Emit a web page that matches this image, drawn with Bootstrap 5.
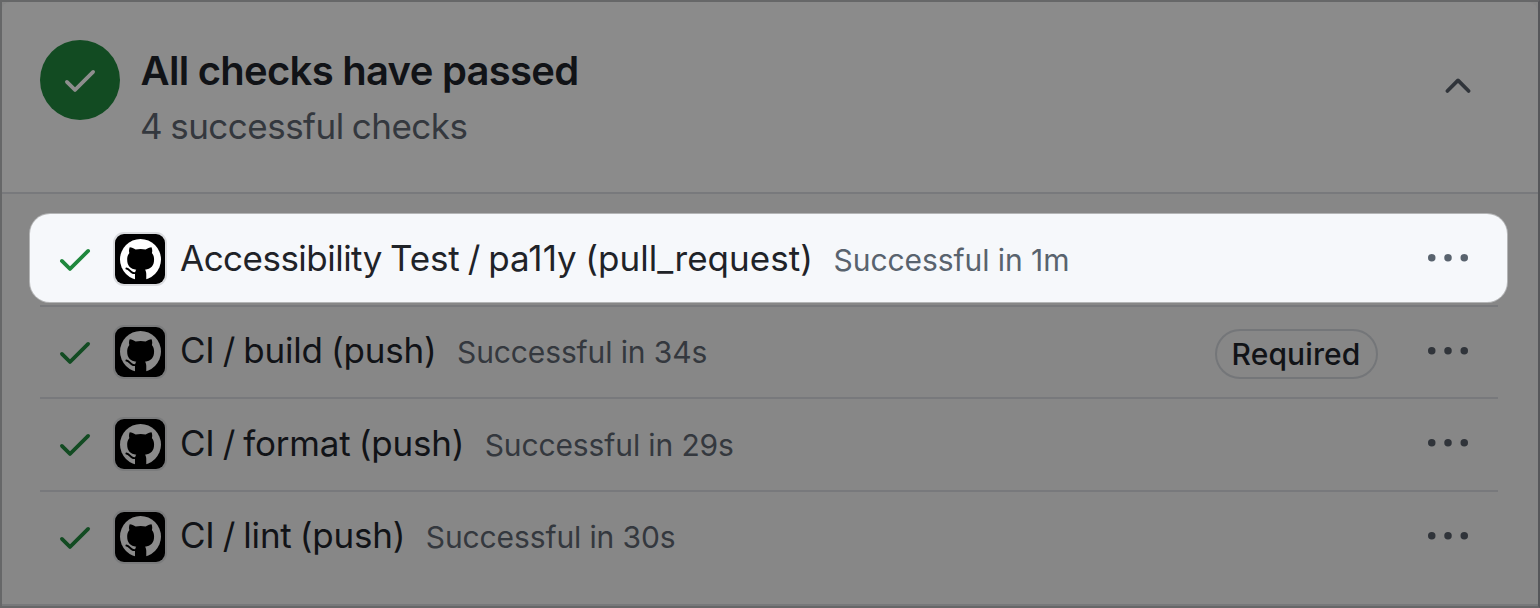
<!DOCTYPE html>
<html lang="en">
<head>
<meta charset="utf-8">
<meta name="viewport" content="width=device-width, initial-scale=1">
<title>Checks</title>
<link href="https://cdn.jsdelivr.net/npm/bootstrap@5.3.0/dist/css/bootstrap.min.css" rel="stylesheet">
<style>
  body { background: #5c5d5f; font-family: Inter, "Liberation Sans", sans-serif; color: #111317; overflow: hidden; }
  .checks-panel { height: 608px; border: 2px solid #666768; border-right-color: #56575a; border-radius: 0; background: #878787; --bs-card-border-width: 2px; box-shadow: inset 0 -2px 0 #77787a; }
  .checks-head { height: 192px; padding: 38px 60px 0 38px; background: #8b8b8b; border-bottom: 2px solid #78797c; border-radius: 8px 10px 0 0; }
  .checks-head > .octi { margin-top: 26px; color: #30343a; }
  .status-circle { width: 80px; height: 80px; background: #124b22; color: #8e8e8e; }
  .octi { width: 40px; height: 40px; fill: currentColor; flex: none; display: block; }
  .head-title { font-size: 40px; line-height: 50px; font-weight: 600; letter-spacing: -.72px; margin: 6px 0 0 20.5px; }
  .head-sub { font-size: 35px; line-height: 50px; letter-spacing: -.52px; word-spacing: -1.2px; color: #34383e; margin: 5px 0 0 20px; }
  .check-list { padding: 20px 30.5px 0 27.5px; }
  .check-row { height: 92.6px; padding: 0 40px 0 25.5px; position: relative; }
  .check-row + .check-row::before { content: ""; position: absolute; left: 10.5px; right: 9.5px; top: -1px; height: 2px; background: #78797c; }
  .check-row .octi.tick { color: #124b22; }
  .check-row.is-lit { height: 88px; margin: 0 1px 3.5px 0; padding: 2px 39px 0 25.5px; border-radius: 20px; background: #f6f8fb; box-shadow: 0 0 0 1px #b4b5b6; color: #1f2328; }
  .check-row.is-lit .tick { color: #1f883d; }
  .app-logo { width: 50px; height: 50px; margin-left: 20px; border-radius: 9px; background: #000; color: #8b8b8b; box-shadow: 0 0 0 2px #7a7b7c; flex: none; }
  .is-lit .app-logo { color: #fff; box-shadow: 0 0 0 2px #dadcdf; }
  .app-logo svg { width: 41px; height: 41px; fill: currentColor; }
  .check-name { font-size: 35px; line-height: 50px; letter-spacing: -.22px; word-spacing: -1.4px; margin-left: 15px; padding-bottom: 3px; }
  .name-tight { letter-spacing: -.52px; }
  .name-loose { letter-spacing: .04px; }
  .check-note { font-size: 30px; line-height: 50px; letter-spacing: -.12px; color: #34383e; margin-left: 20.5px; padding-top: 1px; }
  .is-lit .check-note { padding-top: 2px; letter-spacing: -.06px; }
  .is-lit .check-note, .is-lit .more { color: #59636e; }
  .more { color: #30343a; }
  .required-pill { width: 163px; height: 50px; border: 2px solid #747679; font-size: 30px; font-weight: 500; letter-spacing: .1px; margin: 4px 50px 0 0; padding-top: 1px; }
</style>
</head>
<body>
<svg class="d-none" xmlns="http://www.w3.org/2000/svg">
  <symbol id="i-check" viewBox="0 0 16 16"><path d="M13.78 4.22a.75.75 0 0 1 0 1.06l-7.25 7.25a.75.75 0 0 1-1.06 0L2.22 9.28a.751.751 0 0 1 .018-1.042.751.751 0 0 1 1.042-.018L6 10.94l6.72-6.72a.75.75 0 0 1 1.06 0Z"/></symbol>
  <symbol id="i-up" viewBox="0 0 16 16"><path d="M3.22 10.53a.749.749 0 0 1 0-1.06l4.25-4.25a.749.749 0 0 1 1.06 0l4.25 4.25a.749.749 0 1 1-1.06 1.06L8 6.811 4.28 10.53a.749.749 0 0 1-1.06 0Z"/></symbol>
  <symbol id="i-more" viewBox="0 0 16 16"><path d="M8 9a1.5 1.5 0 1 0 0-3 1.5 1.5 0 0 0 0 3ZM1.5 9a1.5 1.5 0 1 0 0-3 1.5 1.5 0 0 0 0 3Zm13 0a1.5 1.5 0 1 0 0-3 1.5 1.5 0 0 0 0 3Z"/></symbol>
  <symbol id="i-mark" viewBox="0 0 16 16">
    <circle cx="8" cy="8" r="8"/>
    <path fill="#000" d="M3.8 3.2c.75 0 1.6.4 2.3.9a9 9 0 0 1 3.9 0c.7-.5 1.55-.9 2.3-.9.35.85.35 1.7.15 2.25.6.7.85 1.55.85 2.5 0 2.7-1.25 3.75-3.55 4.05.35.4.5 1 .5 1.7V16h-4.4v-2.3c0-.7.15-1.3.5-1.7-2.3-.3-3.55-1.35-3.55-4.05 0-.95.25-1.8.85-2.5-.2-.55-.2-1.4.15-2.25Z"/>
    <path fill="none" stroke="#000" stroke-width=".75" stroke-linecap="round" d="M2.5 11.5c1.2.1 1.4 1.5 2.6 1.75.5.1.9.1 1.3 0"/>
  </symbol>
</svg>
<main class="card checks-panel">
  <header class="checks-head d-flex align-items-start">
    <div class="status-circle rounded-circle d-flex align-items-center justify-content-center flex-shrink-0"><svg class="octi"><use href="#i-check"/></svg></div>
    <div class="flex-grow-1">
      <h1 class="head-title">All checks have passed</h1>
      <p class="head-sub mb-0">4 successful checks</p>
    </div>
    <svg class="octi"><use href="#i-up"/></svg>
  </header>
  <div class="check-list">
    <div class="check-row is-lit d-flex align-items-center">
      <svg class="octi tick"><use href="#i-check"/></svg>
      <span class="app-logo d-flex align-items-center justify-content-center"><svg><use href="#i-mark"/></svg></span>
      <span class="check-name"><span class="name-tight">Accessibility</span> Test / <span class="name-loose">pa11y (pull_request)</span></span><span class="check-note">Successful in 1m</span>
      <svg class="octi more ms-auto"><use href="#i-more"/></svg>
    </div>
    <div class="check-row d-flex align-items-center">
      <svg class="octi tick"><use href="#i-check"/></svg>
      <span class="app-logo d-flex align-items-center justify-content-center"><svg><use href="#i-mark"/></svg></span>
      <span class="check-name">CI / build (push)</span><span class="check-note">Successful in 34s</span>
      <span class="required-pill rounded-pill d-flex align-items-center justify-content-center ms-auto">Required</span>
      <svg class="octi more"><use href="#i-more"/></svg>
    </div>
    <div class="check-row d-flex align-items-center">
      <svg class="octi tick"><use href="#i-check"/></svg>
      <span class="app-logo d-flex align-items-center justify-content-center"><svg><use href="#i-mark"/></svg></span>
      <span class="check-name">CI / format (push)</span><span class="check-note">Successful in 29s</span>
      <svg class="octi more ms-auto"><use href="#i-more"/></svg>
    </div>
    <div class="check-row d-flex align-items-center">
      <svg class="octi tick"><use href="#i-check"/></svg>
      <span class="app-logo d-flex align-items-center justify-content-center"><svg><use href="#i-mark"/></svg></span>
      <span class="check-name">CI / lint (push)</span><span class="check-note">Successful in 30s</span>
      <svg class="octi more ms-auto"><use href="#i-more"/></svg>
    </div>
  </div>
</main>
<script src="https://cdn.jsdelivr.net/npm/bootstrap@5.3.0/dist/js/bootstrap.bundle.min.js"></script>
</body>
</html>
